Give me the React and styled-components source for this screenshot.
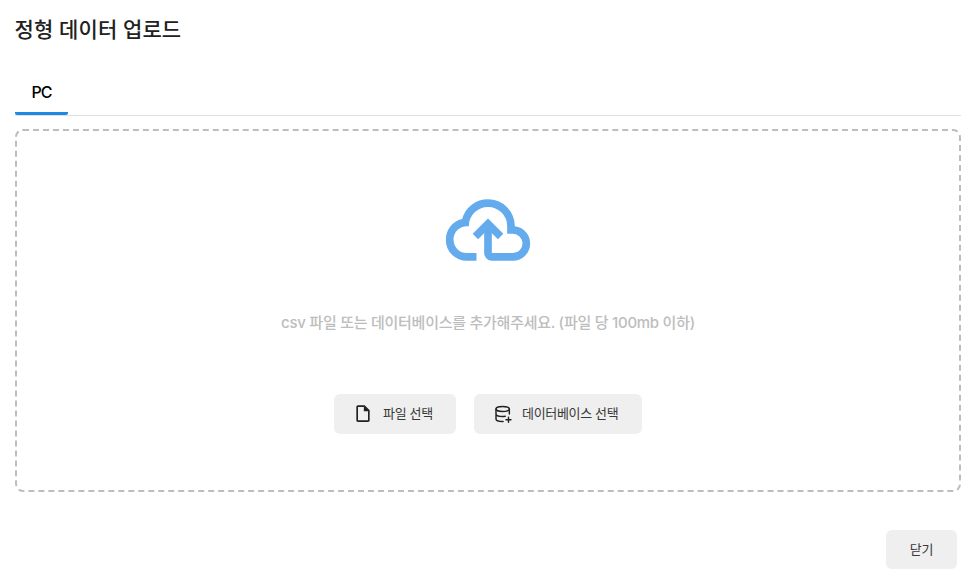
import React from "react";
import styled, { createGlobalStyle } from "styled-components";

const GlobalStyle = createGlobalStyle`
  * { box-sizing: border-box; }
  body { margin: 0; background: #fff; font-family: Inter, "Noto Sans CJK KR", sans-serif; }
`;

const Dialog = styled.main`
  display: flex;
  flex-direction: column;
  height: 582px;
  padding: 13px 15px;
`;

const Title = styled.h1`
  margin: 0 0 0 -0.5px;
  height: 32px;
  font-size: 21px;
  line-height: 33px;
  font-weight: 500;
  letter-spacing: 0.1px;
  white-space: nowrap;
  color: #212121;
`;

const TabBar = styled.div`
  display: flex;
  height: 48px;
  margin-top: 23px;
  border-bottom: 1px solid #e0e0e0;
`;

const Tab = styled.button`
  width: 53px;
  height: 47px;
  padding: 3px 0 0;
  border: 0;
  border-bottom: 3px solid #1e88e5;
  border-radius: 2px;
  background: none;
  font: 500 16px Inter, sans-serif;
  letter-spacing: -0.9px;
  color: #000;
`;

const DropZone = styled.section`
  display: flex;
  flex-direction: column;
  align-items: center;
  height: 363px;
  margin-top: 13px;
  padding-top: 53px;
  border: 2px dashed #bdbdbd;
  border-radius: 8px;
`;

const CloudIcon = styled.svg`
  width: 92px;
  height: 92px;
  fill: #64abee;
`;

const Hint = styled.p`
  margin: 35px 0 0;
  height: 24px;
  font-size: 15px;
  line-height: 24px;
  font-weight: 500;
  letter-spacing: -0.26px;
  white-space: nowrap;
  color: #bdbdbd;
`;

const Actions = styled.div`
  display: flex;
  gap: 18px;
  margin-top: 59px;
`;

const Button = styled.button`
  display: flex;
  align-items: center;
  justify-content: ${(p) => (p.$icon ? "flex-start" : "center")};
  flex: none;
  gap: ${(p) => p.$gap || 9}px;
  width: ${(p) => p.$width}px;
  height: ${(p) => (p.$icon ? 40 : 39)}px;
  padding: 0 0 0 ${(p) => (p.$icon ? 19 : 0)}px;
  border: 0;
  border-radius: 6px;
  background: #efefef;
  font: 400 13px/20px Inter, "Noto Sans CJK KR", sans-serif;
  letter-spacing: -0.33px;
  white-space: nowrap;
  color: #212121;
  svg { width: 20px; height: 20px; flex: none; }
`;

const Label = styled.span`
  padding-bottom: 2px;
  color: #383838;
`;

const Footer = styled.footer`
  display: flex;
  justify-content: flex-end;
  margin-top: 38px;
  padding-right: 4px;
`;

const FileIcon = () => (
  <svg viewBox="0 0.4 24 24" fill="currentColor">
    <path d="M14 2H6c-1.1 0-2 .9-2 2v16c0 1.1.9 2 2 2h12c1.1 0 2-.9 2-2V8l-6-6zm4 18H6V4h7v5h5v11z" />
  </svg>
);

const DatabasePlusIcon = () => (
  <svg viewBox="0.4 0 24 24" fill="none" stroke="currentColor" strokeWidth="1.75" strokeLinecap="round" strokeLinejoin="round">
    <ellipse cx="12" cy="6" rx="8" ry="3" />
    <path d="M4 6v6c0 1.657 3.582 3 8 3 1.075 0 2.1-.08 3.037-.224M20 12V6M4 12v6c0 1.657 3.582 3 8 3 .166 0 .331-.002.495-.006M16 19h6M19 16v6" />
  </svg>
);

export default function App() {
  return (
    <>
      <GlobalStyle />
      <Dialog>
        <Title>정형 데이터 업로드</Title>
        <TabBar>
          <Tab>PC</Tab>
        </TabBar>
        <DropZone>
          <CloudIcon viewBox="0 0 24 24">
            <path d="M6.5 20Q4.22 20 2.61 18.43Q1 16.85 1 14.58Q1 12.63 2.17 11.1Q3.35 9.57 5.25 9.15Q5.88 6.85 7.75 5.43Q9.63 4 12 4Q14.93 4 16.96 6.04Q19 8.07 19 11Q20.73 11.2 21.86 12.5Q23 13.78 23 15.5Q23 17.38 21.69 18.69Q20.38 20 18.5 20H13Q12.18 20 11.59 19.41Q11 18.83 11 18V12.85L9.4 14.4L8 13L12 9L16 13L14.6 14.4L13 12.85V18H18.5Q19.55 18 20.27 17.27Q21 16.55 21 15.5Q21 14.45 20.27 13.73Q19.55 13 18.5 13H17V11Q17 8.93 15.54 7.46Q14.08 6 12 6Q9.93 6 8.46 7.46Q7 8.93 7 11H6.5Q5.05 11 4.03 12.03Q3 13.05 3 14.5Q3 15.95 4.03 17Q5.05 18 6.5 18H9V20Z" />
          </CloudIcon>
          <Hint>csv 파일 또는 데이터베이스를 추가해주세요. (파일 당 100mb 이하)</Hint>
          <Actions>
            <Button $icon $width={122} $gap={10}><FileIcon /><Label>파일 선택</Label></Button>
            <Button $icon $width={168}><DatabasePlusIcon /><Label>데이터베이스 선택</Label></Button>
          </Actions>
        </DropZone>
        <Footer>
          <Button $width={71}><Label>닫기</Label></Button>
        </Footer>
      </Dialog>
    </>
  );
}
